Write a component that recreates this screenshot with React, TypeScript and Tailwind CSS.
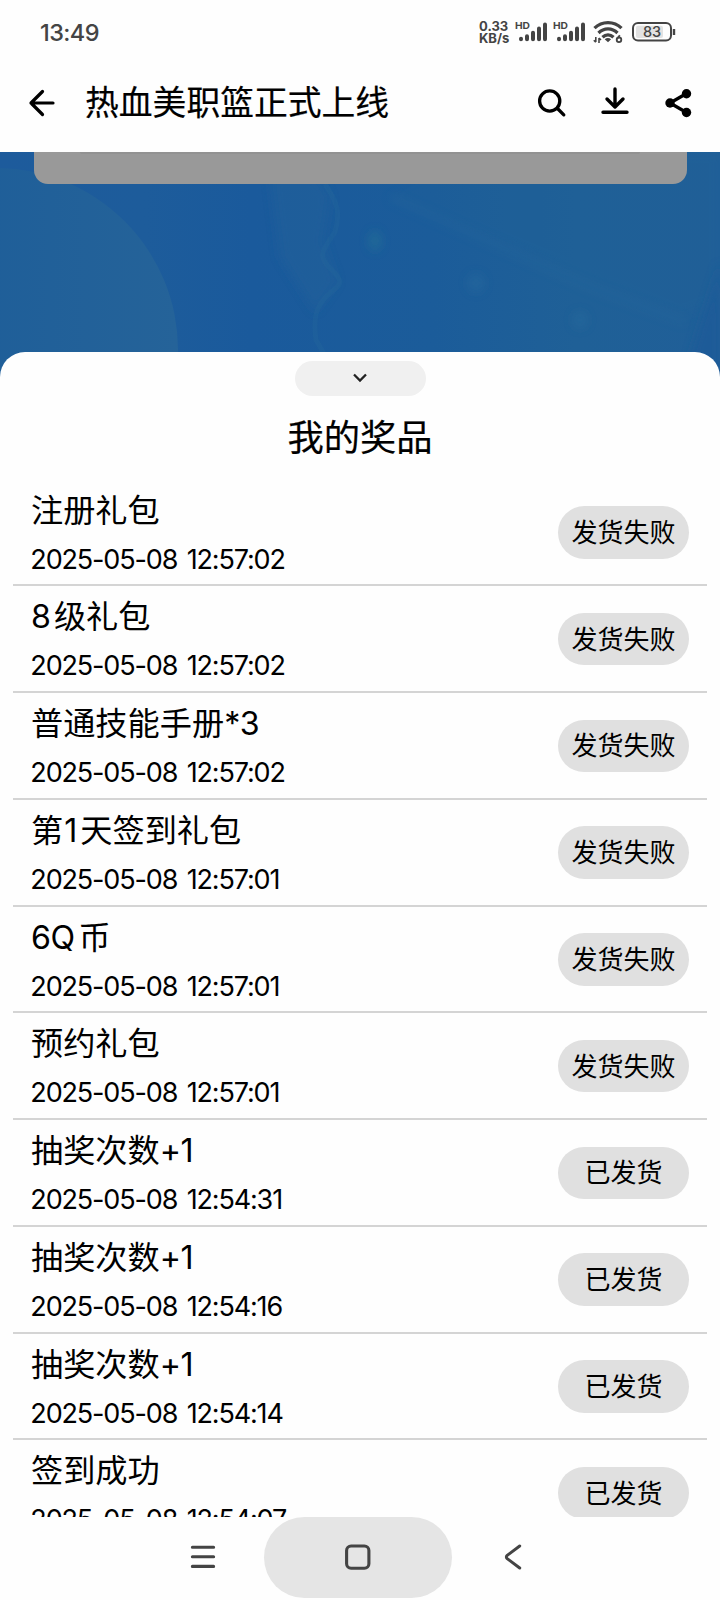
import React from "react";

type Prize = { name: React.ReactNode; time: string; status: string };

const failed = "发货失败";
const sent = "已发货";

const prizes: Prize[] = [
  { name: "注册礼包", time: "2025-05-08 12:57:02", status: failed },
  { name: <><span className="mr-[3px]">8</span>级礼包</>, time: "2025-05-08 12:57:02", status: failed },
  { name: <>普通技能手册<span className="tracking-[-0.5px]">*3</span></>, time: "2025-05-08 12:57:02", status: failed },
  { name: <>第<span className="ml-[1px] mr-[3px]">1</span>天签到礼包</>, time: "2025-05-08 12:57:01", status: failed },
  { name: <><span className="mr-[4px] tracking-[-0.5px]">6Q</span>币</>, time: "2025-05-08 12:57:01", status: failed },
  { name: "预约礼包", time: "2025-05-08 12:57:01", status: failed },
  { name: <>抽奖次数<span className="tracking-[-0.5px]">+1</span></>, time: "2025-05-08 12:54:31", status: sent },
  { name: <>抽奖次数<span className="tracking-[-0.5px]">+1</span></>, time: "2025-05-08 12:54:16", status: sent },
  { name: <>抽奖次数<span className="tracking-[-0.5px]">+1</span></>, time: "2025-05-08 12:54:14", status: sent },
  { name: "签到成功", time: "2025-05-08 12:54:07", status: sent },
];

function Signal() {
  return (
    <svg className="h-[22px] w-[34px]" viewBox="0 0 34 22" fill="#444">
      <text x="0" y="8" fontSize="9.6" fontWeight="700" textLength="15" lengthAdjust="spacingAndGlyphs" fontFamily="Inter, sans-serif">HD</text>
      <g stroke="#444" strokeWidth="4" strokeLinecap="round">
        <path d="M6 17.800v.4M12 15.200v3M18 11.800v6.400M24 7.500v10.700M30 3.500v14.700" />
      </g>
    </svg>
  );
}

function Wifi() {
  return (
    <svg className="h-[24px] w-[30px]" viewBox="0 0 30 24" fill="none" stroke="#444" strokeWidth="3.3">
      <path d="M1.5 8.200C9 .8 21 .8 28.5 8.200" />
      <path d="M5.5 13C11 7.600 19 7.600 24.5 13" />
      <path d="M9.5 17.200c3.3-3 7.700-3 11 0" />
      <path d="M11.700 19.300c2-1.600 4.400-1.600 6.400 0L15 22.300z" fill="#444" stroke="none" />
      <path d="M2.800 17v5M.8 20.300l2 2M6 23v-5M6 18l2 2" strokeWidth="1.600" />
      <circle cx="26" cy="19.800" r="2.300" strokeWidth="1.800" />
      <path d="M24 19l2.800-3.800" strokeWidth="1.800" />
    </svg>
  );
}

function Battery() {
  return (
    <svg className="h-[20px] w-[44px]" viewBox="0 0 44 20" fill="none">
      <rect x="1" y="1" width="38" height="17.600" rx="5" stroke="#444" strokeWidth="2" />
      <rect x="4" y="3.700" width="27" height="12.300" rx="2" fill="#e2e2e2" />
      <path d="M42 7v6" stroke="#444" strokeWidth="2.400" />
      <text x="20" y="15" textAnchor="middle" fontSize="14.500" fontWeight="500" fill="#444" fontFamily="Inter, sans-serif">83</text>
    </svg>
  );
}

function StatusBar() {
  return (
    <div className="flex h-[64px] items-center pl-[40px] pr-[44px] text-[#444]">
      <span className="mt-[1px] text-[23.500px] font-medium tracking-[-0.600px]">13:49</span>
      <div className="ml-auto flex items-center">
        <div className="mr-[5px] w-[31px] whitespace-nowrap text-[13px] font-bold leading-[12px]">
          <div>0.33</div>
          <div>KB/s</div>
        </div>
        <Signal />
        <div className="ml-[4px]"><Signal /></div>
        <div className="ml-[6px]"><Wifi /></div>
        <div className="ml-[9px]"><Battery /></div>
      </div>
    </div>
  );
}

function TitleBar() {
  return (
    <div className="flex h-[78px] items-center pl-[28px] pr-[26px]">
      <svg className="h-[28px] w-[28px]" viewBox="0 0 28 28" fill="none" stroke="#000" strokeWidth="3.200" strokeLinecap="round" strokeLinejoin="round">
        <path d="M25 14H3M14.500 2.500L3 14l11.500 11.500" />
      </svg>
      <h1 className="ml-[29px] whitespace-nowrap text-[33.800px] font-normal leading-none [-webkit-text-stroke:0.200px_#000]">热血美职篮正式上线</h1>
      <div className="ml-auto flex items-center">
        <svg className="h-[32px] w-[32px]" viewBox="0 0 32 32" fill="none" stroke="#000" strokeWidth="3.300" strokeLinecap="round">
          <circle cx="13.700" cy="14" r="10.100" />
          <path d="M21.500 21.500l6.300 6.300" />
        </svg>
        <svg className="ml-[31px] h-[32px] w-[32px]" viewBox="0 0 32 32" fill="none" stroke="#000" strokeWidth="3.400" strokeLinecap="round" strokeLinejoin="round">
          <path d="M16 2v18M8 12l8 8 8-8M4 25.200h24" />
        </svg>
        <svg className="ml-[31px] h-[32px] w-[32px]" viewBox="0 0 32 32" fill="#000" stroke="#000" strokeWidth="3.300">
          <path d="M24.500 6.500L8 16l16.500 9.500" fill="none" />
          <circle cx="8" cy="16" r="4.700" stroke="none" />
          <circle cx="24.500" cy="6.800" r="4.700" stroke="none" />
          <circle cx="24.500" cy="25.500" r="4.700" stroke="none" />
        </svg>
      </div>
    </div>
  );
}

function Backdrop() {
  return (
    <svg className="col-start-1 row-start-1 h-[230px] w-full" viewBox="0 0 720 230" fill="none">
      <defs>
        <linearGradient id="sky" x1="0" x2="1" y1="0" y2="0">
          <stop offset="0" stopColor="#1d5b9c" />
          <stop offset=".2" stopColor="#1d5c9b" />
          <stop offset=".35" stopColor="#1a5a9c" />
          <stop offset=".6" stopColor="#1b5c9a" />
          <stop offset=".8" stopColor="#1f6097" />
          <stop offset="1" stopColor="#205f98" />
        </linearGradient>
        <linearGradient id="orb" x1="0" x2="1" y1="0" y2="0">
          <stop offset=".4" stopColor="#1e5e99" />
          <stop offset="1" stopColor="#256399" />
        </linearGradient>
        <filter id="soft" x="-100%" y="-100%" width="300%" height="300%"><feGaussianBlur stdDeviation="5" /></filter>
      </defs>
      <path d="M0 0h720v230H0z" fill="url(#sky)" />
      <circle cx="-4" cy="198" r="182" fill="url(#orb)" />
      <path d="M270 25h48l12 20-7 45 14 40-22 30-35-55z" fill="#21609a" opacity=".6" filter="url(#soft)" />
      <path d="M325 32c12 18 16 28 10 48-14 20-17 25-5 36 8 8 14 14 6 20-18 14-24 25-20 52l14 24" stroke="#286a9d" strokeWidth="5" opacity=".25" />
      <path d="M390 45l290 120 40-15V0H480z" fill="#206397" opacity=".2" filter="url(#soft)" />
      <path d="M390 45l200 90 95 35" stroke="#2b6a9d" strokeWidth="7" opacity=".3" filter="url(#soft)" />
      <path d="M720 110l-38 120h38z" fill="#1a5a99" opacity=".7" filter="url(#soft)" />
      <ellipse cx="375" cy="89" rx="6" ry="10" fill="#237096" opacity=".7" filter="url(#soft)" />
      <ellipse cx="476" cy="131" rx="8" ry="9" fill="#27699e" opacity=".6" filter="url(#soft)" />
      <ellipse cx="580" cy="168" rx="7" ry="8" fill="#276a9d" opacity=".6" filter="url(#soft)" />
    </svg>
  );
}

function PrizeRow({ name, time, status }: Prize) {
  return (
    <li className="flex h-[106.750px] shrink-0 items-start justify-between border-b-2 border-[#d4d4d4] pl-[18px] pr-[18px]">
      <div className="whitespace-nowrap text-black">
        <div className="mt-[11px] h-[40px] text-[32.200px] leading-[40px]">{name}</div>
        <div className="ml-[-0.700px] mt-[11px] text-[27px] leading-[36px] tracking-[-1.150px] [word-spacing:3px]">{time}</div>
      </div>
      <span className="mt-[26.500px] flex h-[52.500px] w-[131px] items-center justify-center whitespace-nowrap rounded-full bg-[#e0e0e0] pt-[1px] text-[26px] leading-none text-black">
        {status}
      </span>
    </li>
  );
}

function NavBar() {
  return (
    <nav className="flex h-[83px] shrink-0 items-start bg-[#fefefe]">
      <div className="flex h-[79px] w-[264px] items-center pl-[190px]">
        <svg className="h-[26px] w-[26px]" viewBox="0 0 26 26" stroke="#444" strokeWidth="3.100" strokeLinecap="round">
          <path d="M2.400 3.200h21.200M2.400 12.800h21.200M2.400 22.400h21.200" />
        </svg>
      </div>
      <div className="flex h-[81px] w-[188px] items-center justify-center rounded-full bg-[#e5e5e5]">
        <svg className="mb-[2px] h-[26px] w-[26px]" viewBox="0 0 26 26" fill="none" stroke="#444" strokeWidth="3.100">
          <rect x="1.600" y="2" width="22.300" height="22.300" rx="4.500" />
        </svg>
      </div>
      <div className="flex h-[79px] items-center pl-[52px]">
        <svg className="h-[26px] w-[20px]" viewBox="0 0 20 26" fill="none" stroke="#444" strokeWidth="3" strokeLinecap="round">
          <path d="M15.700 2L3.200 11.400Q1.500 13 3.200 14.600L15.700 24" />
        </svg>
      </div>
    </nav>
  );
}

export default function App() {
  return (
    <div className="flex h-[1600px] w-[720px] flex-col overflow-hidden bg-[#fefefe] [font-family:Inter,'Noto_Sans_CJK_SC',sans-serif]">
      <header className="h-[152px] shrink-0 bg-[#fefefe]">
        <StatusBar />
        <TitleBar />
      </header>
      <main className="grid min-h-0 flex-1 grid-cols-[720px] grid-rows-[1365px] overflow-hidden">
        <Backdrop />
        <div className="col-start-1 row-start-1 flex flex-col">
          <div className="mx-[33.500px] mb-[168px] flex h-[31.500px] shrink-0 justify-center rounded-b-[14px] bg-[#999]">
            <div className="h-[2px] w-[560px] rounded-b-full bg-[#929292]" />
          </div>
          <section className="flex min-h-0 flex-1 flex-col overflow-hidden rounded-t-[25px] bg-[#fefefe]">
            <button className="mx-auto mt-[9px] flex h-[35px] w-[131px] shrink-0 items-center justify-center rounded-full bg-[#f0f0f0]">
              <svg className="h-[10px] w-[14px]" viewBox="0 0 14 10" fill="none" stroke="#222" strokeWidth="2.300">
                <path d="M1 1.500l6 6 6-6" />
              </svg>
            </button>
            <h2 className="mt-[19px] h-[46px] shrink-0 text-center text-[36.300px] font-normal leading-[46px] [-webkit-text-stroke:0.200px_#000]">我的奖品</h2>
            <ul className="mx-[13px] mt-[19px] flex flex-col">
              {prizes.map((p, i) => <PrizeRow key={i} {...p} />)}
            </ul>
          </section>
        </div>
      </main>
      <NavBar />
    </div>
  );
}
